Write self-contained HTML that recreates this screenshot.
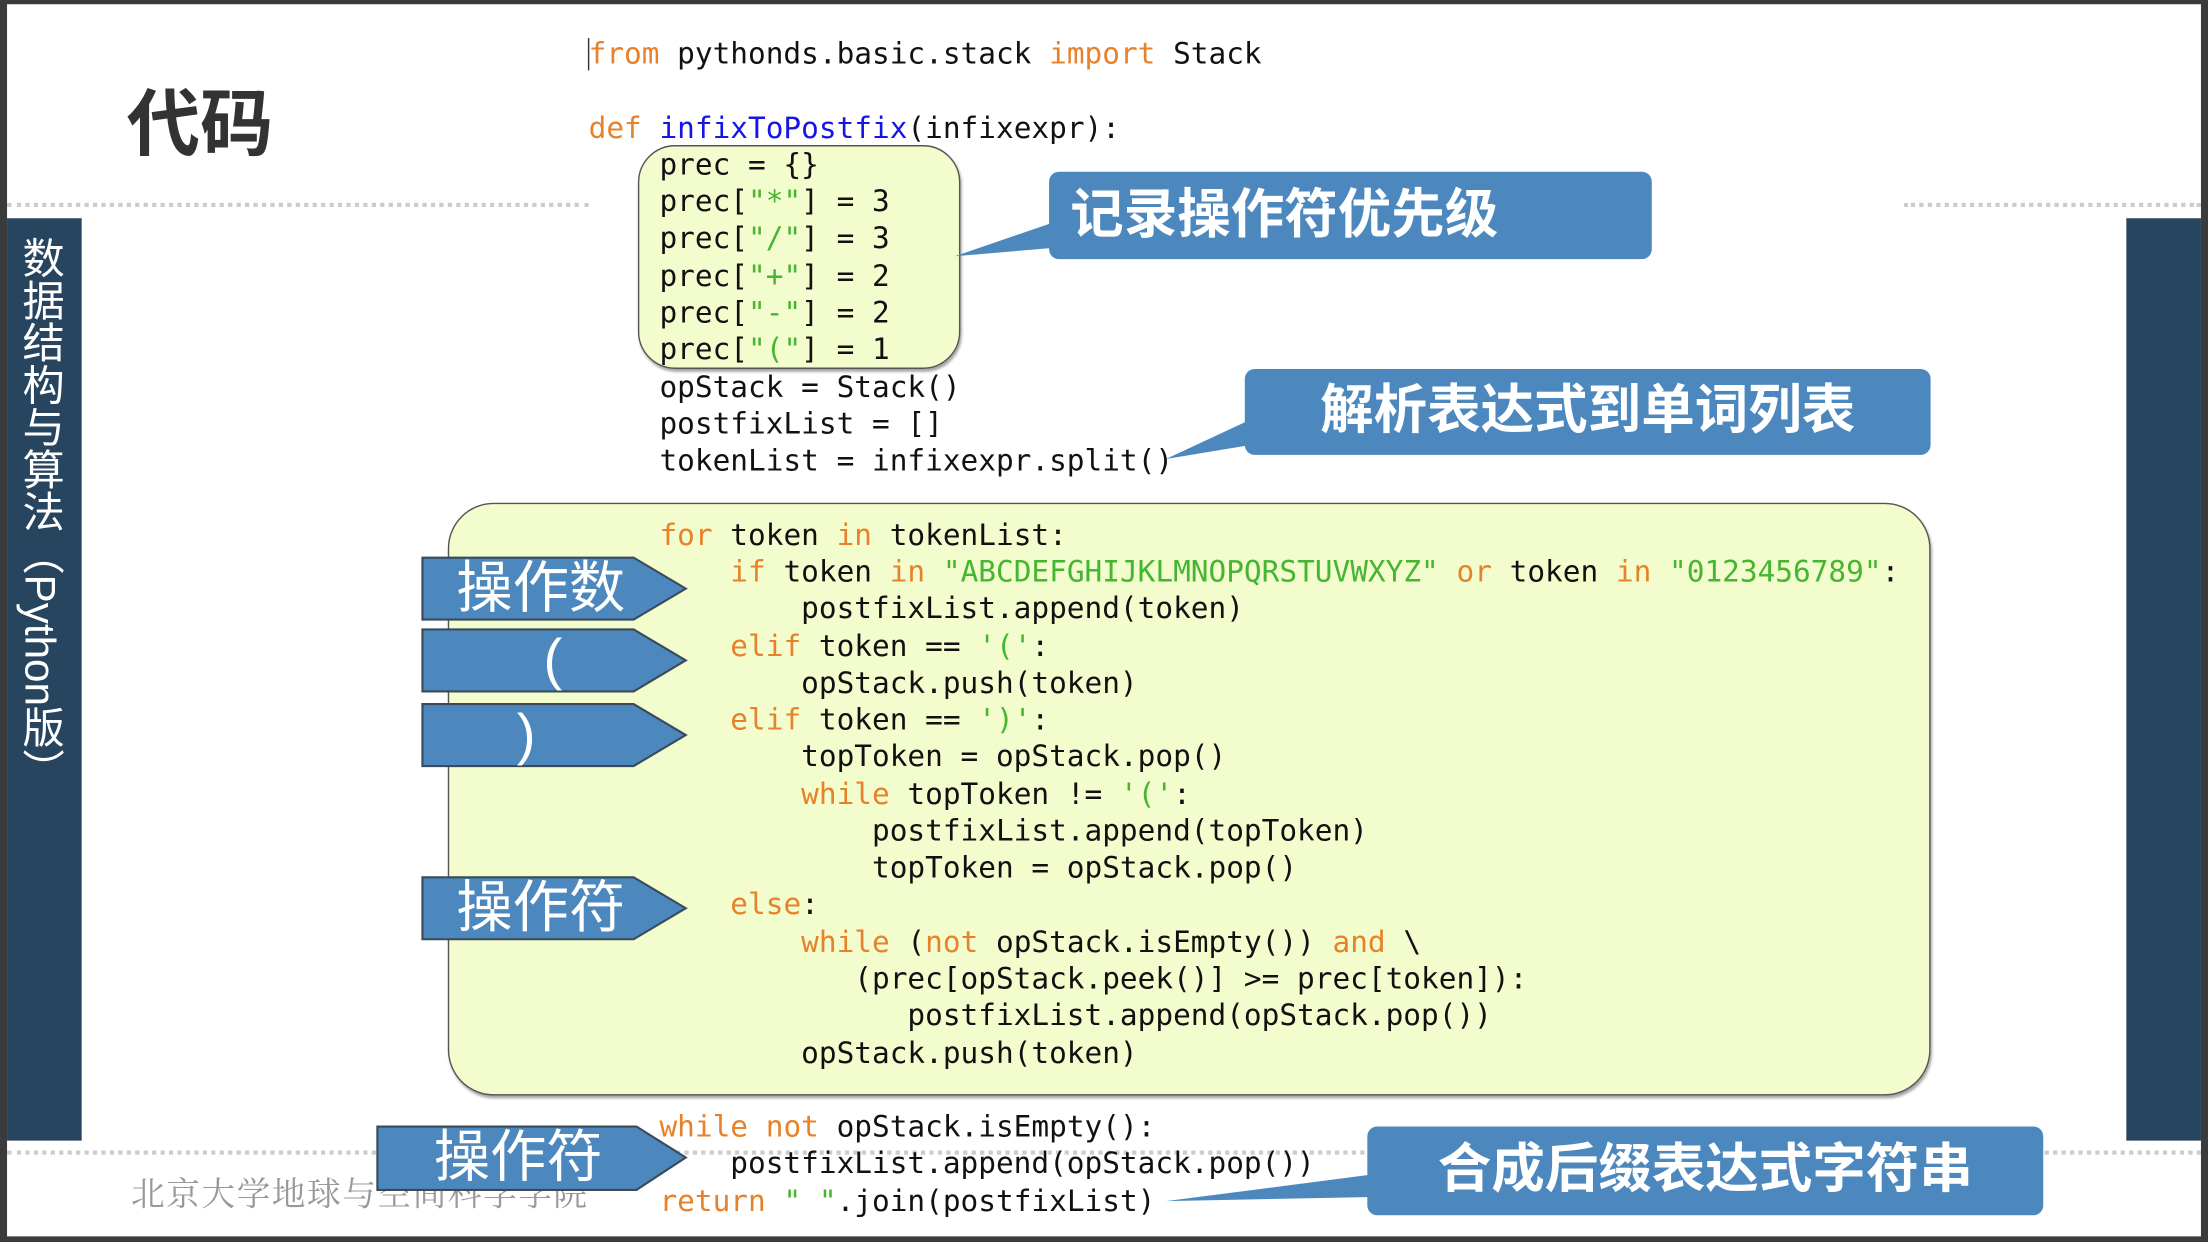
<!DOCTYPE html>
<html><head><meta charset="utf-8"><style>
html,body{margin:0;padding:0;background:#3b3b3b;}
#wrap{width:1568px;height:882px;transform:scale(1.408163);transform-origin:0 0;position:relative;overflow:hidden;background:#3b3b3b;}
#slide{position:absolute;left:5px;top:3px;width:1558px;height:875px;background:#fff;}
.abs{position:absolute;}
pre{margin:0;font-family:"DejaVu Sans Mono","Liberation Mono",monospace;font-size:20.9px;line-height:26.28px;color:#111;}
.k{color:#e8822a}.f{color:#1515e6}.s{color:#46b532}
.cn{font-family:"Liberation Sans","Noto Sans CJK SC",sans-serif;}
</style></head><body><div id="wrap">
<div id="slide"></div>
<div class="abs" style="left:5px;top:144px;width:413px;border-top:3px dotted #ccc"></div>
<div class="abs" style="left:1352px;top:144px;width:211px;border-top:3px dotted #ccc"></div>
<div class="abs" style="left:5px;top:817px;width:1558px;border-top:3px dotted #ccc"></div>
<div class="abs" style="left:5px;top:155px;width:53px;height:655px;background:#284560"></div>
<div class="abs" style="left:1510px;top:155px;width:53px;height:655px;background:#284560"></div>
<div class="abs cn" style="left:8px;top:168px;writing-mode:vertical-rl;color:#fff;font-size:30px;line-height:38px;">数据结构与算法（Python版）</div>
<div class="abs cn" style="left:90px;top:46px;font-size:52px;font-weight:bold;color:#333;">代码</div>
<div class="abs" style="left:93px;top:828px;font-family:'Noto Serif CJK SC',serif;font-size:24px;letter-spacing:1px;color:#999;">北京大学地球与空间科学学院</div>
<svg class="abs" style="left:0;top:0" width="1568" height="882">
<defs><filter id="sh"><feDropShadow dx="1" dy="2" stdDeviation="1" flood-color="#000" flood-opacity="0.35"/></filter></defs>
<rect x="453.5" y="103.5" width="228" height="158" rx="26" fill="#f3fccd" stroke="#555" filter="url(#sh)"/>
<rect x="318.5" y="357.5" width="1052" height="420" rx="32" fill="#f3fccd" stroke="#555" filter="url(#sh)"/>
<g fill="#4c88bd">
<rect x="745" y="122" width="428" height="62" rx="7"/><polygon points="748,158 678,182 748,176"/>
<rect x="884" y="262" width="487" height="61" rx="7"/><polygon points="888,298 828,326 888,316"/>
<rect x="971" y="800" width="480" height="63" rx="7"/><polygon points="975,834 828,853 975,850"/>
</g>
<g fill="#4c88bd" stroke="#3a4a5a" stroke-width="1.5">
<polygon points="300,396 450,396 487,418 450,440 300,440"/>
<polygon points="300,447 450,447 487,469 450,491 300,491"/>
<polygon points="300,500 450,500 487,522 450,544 300,544"/>
<polygon points="300,623 450,623 487,645 450,667 300,667"/>
<polygon points="268,800 452,800 487,822 452,845 268,845"/>
</g>
<line x1="418" y1="27" x2="418" y2="50" stroke="#333" stroke-width="1"/>
</svg>
<div class="abs cn" style="left:760px;top:128px;color:#fff;font-size:38px;font-weight:bold;line-height:50px;">记录操作符优先级</div>
<div class="abs cn" style="left:884px;width:487px;text-align:center;top:267px;color:#fff;font-size:38px;font-weight:bold;line-height:50px;">解析表达式到单词列表</div>
<div class="abs cn" style="left:971px;width:480px;text-align:center;top:806px;color:#fff;font-size:38px;font-weight:bold;line-height:50px;">合成后缀表达式字符串</div>
<div class="abs cn" style="left:324px;top:394px;color:#fff;font-size:40px;line-height:48px;">操作数</div>
<div class="abs cn" style="left:386px;top:445px;color:#fff;font-size:40px;line-height:48px;">(</div>
<div class="abs cn" style="left:367px;top:498px;color:#fff;font-size:40px;line-height:48px;">)</div>
<div class="abs cn" style="left:324px;top:621px;color:#fff;font-size:40px;line-height:48px;">操作符</div>
<div class="abs cn" style="left:308px;top:798px;color:#fff;font-size:40px;line-height:48px;">操作符</div>
<pre class="abs" style="left:418px;top:25px;"><span class="k">from</span> pythonds.basic.stack <span class="k">import</span> Stack

<span class="k">def</span> <span class="f">infixToPostfix</span>(infixexpr):
    prec = {}
    prec[<span class="s">"*"</span>] = 3
    prec[<span class="s">"/"</span>] = 3
    prec[<span class="s">"+"</span>] = 2
    prec[<span class="s">"-"</span>] = 2
    prec[<span class="s">"("</span>] = 1
    opStack = Stack()
    postfixList = []
    tokenList = infixexpr.split()

    <span class="k">for</span> token <span class="k">in</span> tokenList:
        <span class="k">if</span> token <span class="k">in</span> <span class="s">"ABCDEFGHIJKLMNOPQRSTUVWXYZ"</span> <span class="k">or</span> token <span class="k">in</span> <span class="s">"0123456789"</span>:
            postfixList.append(token)
        <span class="k">elif</span> token == <span class="s">'('</span>:
            opStack.push(token)
        <span class="k">elif</span> token == <span class="s">')'</span>:
            topToken = opStack.pop()
            <span class="k">while</span> topToken != <span class="s">'('</span>:
                postfixList.append(topToken)
                topToken = opStack.pop()
        <span class="k">else</span>:
            <span class="k">while</span> (<span class="k">not</span> opStack.isEmpty()) <span class="k">and</span> \
               (prec[opStack.peek()] >= prec[token]):
                  postfixList.append(opStack.pop())
            opStack.push(token)

    <span class="k">while</span> <span class="k">not</span> opStack.isEmpty():
        postfixList.append(opStack.pop())
    <span class="k">return</span> <span class="s">" "</span>.join(postfixList)</pre>
</div></body></html>
